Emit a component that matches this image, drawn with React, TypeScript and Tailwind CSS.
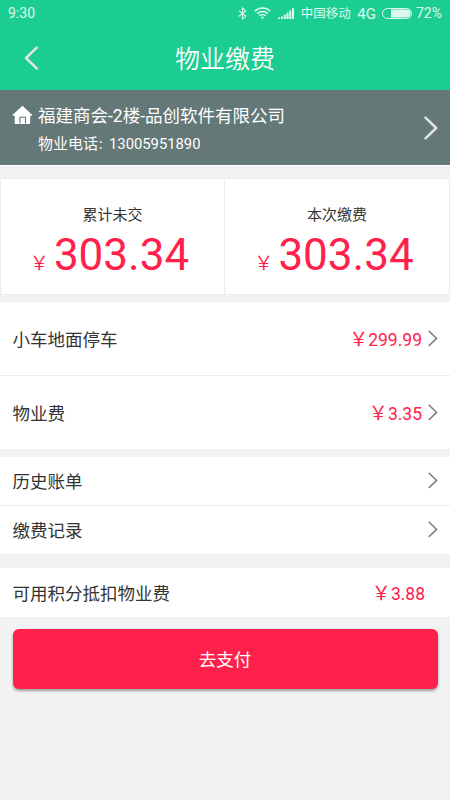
import type { ReactNode } from "react";

const BILLS = [
  { name: "小车地面停车", amount: "299.99" },
  { name: "物业费", amount: "3.35" },
];

const LINKS = ["历史账单", "缴费记录"];

const TOTALS = [
  { label: "累计未交", amount: "303.34" },
  { label: "本次缴费", amount: "303.34" },
];

function Chevron() {
  return (
    <svg width="10" height="17" viewBox="0 0 10 17" fill="none" stroke="#7c7c7c" strokeWidth="1.5">
      <path d="M.7.8 8.6 8.4.7 16" />
    </svg>
  );
}

function Price({ amount }: { amount: string }) {
  return (
    <span className="flex items-baseline pt-[3px] text-[#ff214b]">
      <span className="text-[19px]">￥</span>
      {amount}
    </span>
  );
}

function StatusBar() {
  return (
    <div className="flex h-[26px] items-center px-2 text-[14px] text-white/85">
      <span>9:30</span>
      <div className="ml-auto flex items-center">
        {/* Bluetooth */}
        <svg width="9" height="13" viewBox="0 0 9 13" fill="none" stroke="currentColor" strokeWidth="1.1">
          <path d="M.7 3.6 7.8 9.1 4.4 12V1l3.4 2.9L.7 9.4" />
        </svg>
        {/* Wi-Fi */}
        <svg className="ml-[7px]" width="17" height="12" viewBox="0 0 17 12" fill="none" stroke="currentColor" strokeWidth="1.5">
          <path d="M.7 4.2a11.2 11.2 0 0 1 15.6 0M3.1 6.6a7.8 7.8 0 0 1 10.8 0M5.4 8.9a4.5 4.5 0 0 1 6.2 0" />
          <circle cx="8.5" cy="10.6" r="1.2" fill="currentColor" stroke="none" />
        </svg>
        {/* Signal */}
        <svg className="ml-[7px]" width="16" height="11" viewBox="0 0 16 11" fill="currentColor">
          <path d="M0 11v-1l2-1v2zM3 11V8.4h2V11zM5.8 11V6.7h2V11zM8.5 11V4.7h2V11zM11.2 11V2.5h2V11zM14 11V.3h2V11z" />
        </svg>
        <span className="ml-[7px] pt-[3px] text-[12.5px]">中国移动</span>
        <span className="ml-[6.5px] pt-[2px] text-[15px]">4G</span>
        {/* Battery */}
        <svg className="ml-[6px]" width="30" height="11" viewBox="0 0 30 11">
          <rect x=".5" y=".5" width="29" height="10" rx="5" fill="none" stroke="currentColor" />
          <path d="M9 1.5h15.5a4 4 0 0 1 0 8H9z" fill="currentColor" />
        </svg>
        <span className="ml-[4px]">72%</span>
      </div>
    </div>
  );
}

function Row({ children, className }: { children: ReactNode; className: string }) {
  return (
    <div className={`flex items-center justify-between bg-white pl-[12.5px] text-[17.5px] text-[#333] ${className}`}>
      {children}
    </div>
  );
}

export default function App() {
  return (
    <div className="flex h-[800px] w-[450px] flex-col overflow-hidden bg-[#f2f2f2] font-[Roboto,'Noto_Sans_CJK_SC',sans-serif] leading-none">
      <header className="h-[90px] shrink-0 bg-[#1bcd91]">
        <StatusBar />
        <div className="grid h-[64px] grid-cols-[60px_1fr_60px] items-center">
          <svg className="ml-[24px]" width="15" height="24" viewBox="0 0 15 24" fill="none" stroke="#e2e6e4" strokeWidth="2.5" strokeLinecap="round" strokeLinejoin="round">
            <path d="M12.7 1.7 2 12l10.7 10.3" />
          </svg>
          <h1 className="pt-[2px] text-center text-[25px] font-[350] text-white">物业缴费</h1>
        </div>
      </header>

      {/* Property info */}
      <section className="flex h-[76px] shrink-0 items-center justify-between border-b border-white bg-[#647878] px-[12px] text-white">
        <div className="pt-[5px]">
          <div className="flex items-center text-[17.5px]">
            <svg className="-mt-[3px]" width="21" height="20" viewBox="0 0 21 20" fill="currentColor">
              <path d="M10.5.8 20 9.8c.5.6.2 1-.5 1h-1.3v7c0 .8-.4 1.2-1.2 1.2H3.9c-.8 0-1.2-.4-1.2-1.2v-7H1.2c-.7 0-1-.4-.5-1z" />
              <path d="M7.9 18.5v-6.2h5.6v6.2" fill="none" stroke="#647878" strokeWidth="1.1" />
            </svg>
            <span className="ml-[5px]">福建商会-2楼-品创软件有限公司</span>
          </div>
          <div className="mt-[12px] ml-[26px] flex items-baseline text-[15px]">
            <span>物业电话</span>
            <span className="text-[11px]">：</span>
            <span className="text-[14.8px]">13005951890</span>
          </div>
        </div>
        <svg width="14" height="24" viewBox="0 0 14 24" fill="none" stroke="#e2e2e2" strokeWidth="2.5" strokeLinecap="round" strokeLinejoin="round">
          <path d="M1.5 1.7 12.2 12 1.5 22.3" />
        </svg>
      </section>

      {/* Totals */}
      <section className="mt-[12px] grid h-[117px] shrink-0 grid-cols-2 divide-x divide-[#ececec] border border-[#ececec] bg-white">
        {TOTALS.map((t) => (
          <div key={t.label} className="flex flex-col items-center pt-[29px]">
            <span className="text-[15px] text-[#333]">{t.label}</span>
            <span className="mt-[10px] mr-[6px] flex items-baseline text-[#ff214b]">
              <span className="text-[19px] font-[350]">￥</span>
              <span className="ml-[5px] text-[44px]">{t.amount}</span>
            </span>
          </div>
        ))}
      </section>

      {/* Bills */}
      <section className="mt-[7px] shrink-0 divide-y divide-[#ececec]">
        {BILLS.map((b) => (
          <Row key={b.name} className="h-[73.5px] pr-[12px]">
            <span className="pt-[4px]">{b.name}</span>
            <span className="flex items-center gap-[6px]">
              <Price amount={b.amount} />
              <Chevron />
            </span>
          </Row>
        ))}
      </section>

      <section className="mt-[8px] shrink-0 divide-y divide-[#ececec]">
        {LINKS.map((l) => (
          <Row key={l} className="h-[48.5px] pr-[12px]">
            <span className="pt-[3px]">{l}</span>
            <Chevron />
          </Row>
        ))}
      </section>

      {/* Points */}
      <Row className="mt-[13.5px] h-[49px] shrink-0 pr-[25px]">
        <span className="pt-[5px]">可用积分抵扣物业费</span>
        <Price amount="3.88" />
      </Row>

      <button className="mx-[12.5px] mt-[12.5px] h-[60px] shrink-0 rounded-[6px] bg-[#ff214b] pt-[3px] text-[17.5px] text-white shadow-[0_2px_3px_rgba(0,0,0,0.35)]">
        去支付
      </button>
    </div>
  );
}
